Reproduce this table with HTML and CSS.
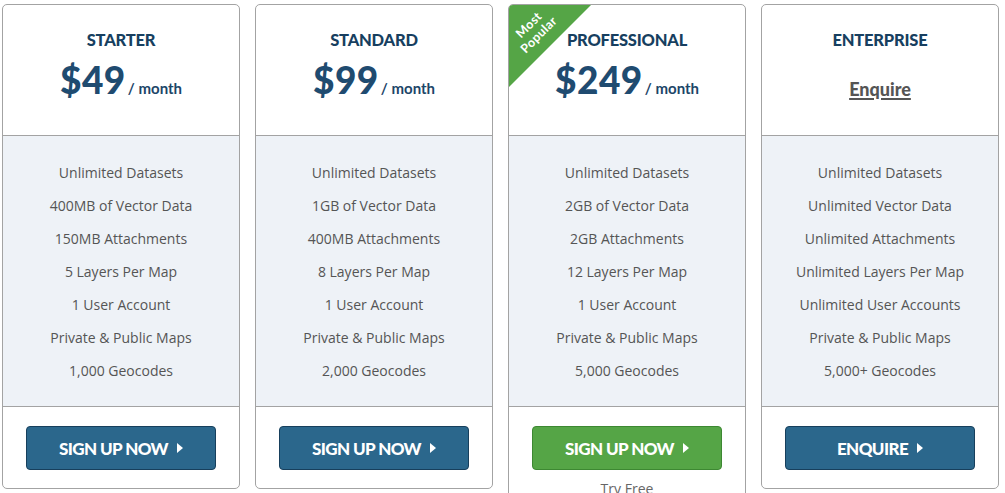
FILE: index.html
```html
<!DOCTYPE html>
<html>
<head>
<meta charset="utf-8">
<link rel="stylesheet" href="styles.css">
</head>
<body>
<div class="plans">
  <div class="card">
    <div class="head">
      <div class="title">STARTER</div>
      <div class="price"><span class="amount">$49</span><span class="per">/ month</span></div>
    </div>
    <ul class="features">
      <li>Unlimited Datasets</li>
      <li>400MB of Vector Data</li>
      <li>150MB Attachments</li>
      <li>5 Layers Per Map</li>
      <li>1 User Account</li>
      <li>Private &amp; Public Maps</li>
      <li>1,000 Geocodes</li>
    </ul>
    <div class="foot"><a class="btn">SIGN UP NOW<span class="arrow"></span></a></div>
  </div>
  <div class="card">
    <div class="head">
      <div class="title">STANDARD</div>
      <div class="price"><span class="amount">$99</span><span class="per">/ month</span></div>
    </div>
    <ul class="features">
      <li>Unlimited Datasets</li>
      <li>1GB of Vector Data</li>
      <li>400MB Attachments</li>
      <li>8 Layers Per Map</li>
      <li>1 User Account</li>
      <li>Private &amp; Public Maps</li>
      <li>2,000 Geocodes</li>
    </ul>
    <div class="foot"><a class="btn">SIGN UP NOW<span class="arrow"></span></a></div>
  </div>
  <div class="card featured">
    <div class="ribbon"><span class="ribbon-text">Most<br>Popular</span></div>
    <div class="head">
      <div class="title">PROFESSIONAL</div>
      <div class="price"><span class="amount">$249</span><span class="per">/ month</span></div>
    </div>
    <ul class="features">
      <li>Unlimited Datasets</li>
      <li>2GB of Vector Data</li>
      <li>2GB Attachments</li>
      <li>12 Layers Per Map</li>
      <li>1 User Account</li>
      <li>Private &amp; Public Maps</li>
      <li>5,000 Geocodes</li>
    </ul>
    <div class="foot">
      <a class="btn btn-green">SIGN UP NOW<span class="arrow"></span></a>
      <div class="try">Try Free</div>
    </div>
  </div>
  <div class="card">
    <div class="head">
      <div class="title">ENTERPRISE</div>
      <a class="enquire">Enquire</a>
    </div>
    <ul class="features">
      <li>Unlimited Datasets</li>
      <li>Unlimited Vector Data</li>
      <li>Unlimited Attachments</li>
      <li>Unlimited Layers Per Map</li>
      <li>Unlimited User Accounts</li>
      <li>Private &amp; Public Maps</li>
      <li>5,000+ Geocodes</li>
    </ul>
    <div class="foot"><a class="btn">ENQUIRE<span class="arrow"></span></a></div>
  </div>
</div>
</body>
</html>
```

FILE: styles.css
```css
html, body {
  margin: 0;
  padding: 0;
  background: #ffffff;
  overflow: hidden;
}
body {
  padding: 4px 0 0 2px;
  font-family: "Open Sans", "Liberation Sans", sans-serif;
}
.plans {
  display: flex;
  align-items: flex-start;
  gap: 15px;
}
.card {
  position: relative;
  width: 236px;
  border: 1px solid #a3a3a3;
  border-radius: 5px;
  background: #fff;
  overflow: hidden;
}
.head {
  border-bottom: 1px solid #a3a3a3;
  display: flex;
  flex-direction: column;
  align-items: center;
  padding-top: 25px;
  box-sizing: border-box;
  height: 131px;
}
.title {
  font-family: "Lato", "Liberation Sans", sans-serif;
  font-weight: 900;
  font-size: 16.5px;
  line-height: 20px;
  color: #173f60;
  letter-spacing: -0.2px;
}
.price {
  margin-top: 10px;
  display: flex;
  align-items: baseline;
  font-family: "Lato", "Liberation Sans", sans-serif;
  line-height: 40px;
}
.amount {
  font-size: 37px;
  font-weight: 900;
  letter-spacing: 0.5px;
  color: #1f4b70;
}
.per {
  font-size: 15px;
  font-weight: 700;
  margin-left: 2px;
  color: #1c4568;
}
.enquire {
  margin-top: 27px;
  font-family: "Lato", "Liberation Sans", sans-serif;
  font-weight: 900;
  font-size: 18px;
  line-height: 24px;
  color: #555;
  text-decoration: underline;
  text-decoration-thickness: 2px;
  text-underline-offset: 2px;
}
.features {
  list-style: none;
  margin: 0;
  padding: 20px 0;
  background: #eef2f7;
  border-bottom: 1px solid #a3a3a3;
  height: 271px;
  box-sizing: border-box;
}
.features li {
  text-align: center;
  font-size: 14px;
  line-height: 33px;
  color: #555;
}
.foot {
  height: 81px;
  display: flex;
  flex-direction: column;
  align-items: center;
  padding-top: 19px;
  box-sizing: border-box;
}
.featured .foot {
  height: auto;
  padding-bottom: 20px;
}
.btn {
  display: flex;
  align-items: center;
  justify-content: center;
  width: 190px;
  height: 44px;
  box-sizing: border-box;
  background: #2b678c;
  border: 1px solid #173f5c;
  border-radius: 4px;
  color: #fff;
  font-family: "Lato", "Liberation Sans", sans-serif;
  font-weight: 900;
  font-size: 17px;
  letter-spacing: -0.6px;
}
.btn-green {
  background: #55a546;
  border-color: #3d8832;
}
.arrow {
  display: inline-block;
  width: 0;
  height: 0;
  margin-left: 9px;
  border-left: 6px solid #fff;
  border-top: 5px solid transparent;
  border-bottom: 5px solid transparent;
}
.try {
  margin-top: 9px;
  font-size: 14px;
  color: #666;
  line-height: 20px;
}
.ribbon {
  position: absolute;
  left: 0;
  top: 0;
  width: 82px;
  height: 82px;
  background: #55a546;
  clip-path: polygon(0 0, 100% 0, 0 100%);
}
.ribbon-text {
  position: absolute;
  left: -12px;
  top: 11px;
  width: 74px;
  text-align: center;
  transform: rotate(-45deg);
  color: #fff;
  font-family: "Lato", "Liberation Sans", sans-serif;
  font-weight: 700;
  font-size: 12.5px;
  line-height: 14px;
  letter-spacing: 0.4px;
}
```
